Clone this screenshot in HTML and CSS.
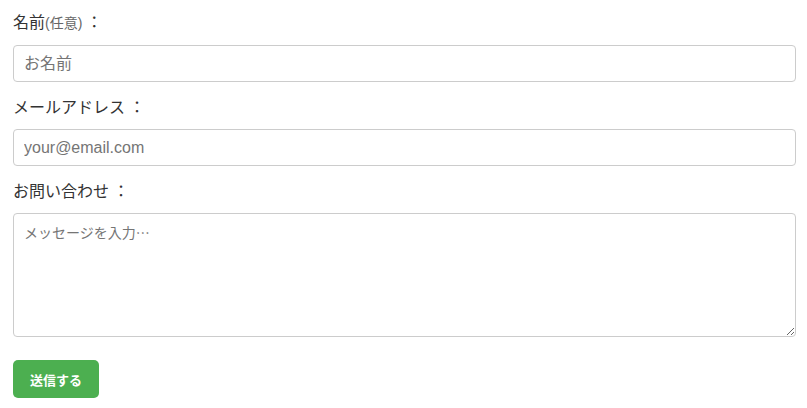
FILE: index.html
```html
<!DOCTYPE HTML>
<html lang="ja">
<head>
    <meta charset="utf-8">
    <meta name="viewport" content="width=device-width, initial-scale=1">
    <link rel="stylesheet" href="styles.css">
</head>
<body>
    <form class="contact-form">
        <label for="name">名前<span class="optional">(任意)</span><span class="colon">：</span></label>
        <input type="text" id="name" placeholder="お名前">

        <label for="email">メールアドレス<span class="colon">：</span></label>
        <input type="email" id="email" placeholder="your@email.com">

        <label for="message">お問い合わせ<span class="colon">：</span></label>
        <textarea id="message" placeholder="メッセージを入力…"></textarea>

        <button type="submit">送信する</button>
    </form>
</body>
</html>
```

FILE: styles.css
```css
body {
    font-family: "Liberation Sans", "Noto Sans CJK JP", sans-serif;
    background-color: #ffffff;
    color: #333333;
    margin: 0;
    padding: 0;
}

.contact-form {
    width: 783px;
    padding: 11px 13px;
}

.contact-form label {
    display: block;
    font-size: 16px;
    line-height: 23px;
    margin-bottom: 10px;
}

.optional {
    font-size: 14px;
    color: #666666;
}

.colon {
    padding-left: 4px;
}

.contact-form input,
.contact-form textarea {
    display: block;
    box-sizing: border-box;
    width: 100%;
    border: 1px solid #cccccc;
    border-radius: 4px;
    font-family: "Liberation Sans", "Noto Sans CJK JP", sans-serif;
    color: #333333;
}

.contact-form input {
    height: 37px;
    padding: 8px 10px;
    font-size: 16px;
    margin-bottom: 14px;
}

.contact-form textarea {
    height: 124px;
    padding: 8px 10px;
    font-family: "Noto Sans CJK JP", sans-serif;
    font-size: 14px;
    margin-bottom: 23px;
}

.contact-form input::placeholder,
.contact-form textarea::placeholder {
    color: #757575;
}

.contact-form button {
    height: 38px;
    padding: 0 17px;
    font-size: 13px;
    font-weight: bold;
    font-family: "Liberation Sans", "Noto Sans CJK JP", sans-serif;
    border: none;
    border-radius: 5px;
    background-color: #4CAF50;
    color: #ffffff;
    cursor: pointer;
}
```
